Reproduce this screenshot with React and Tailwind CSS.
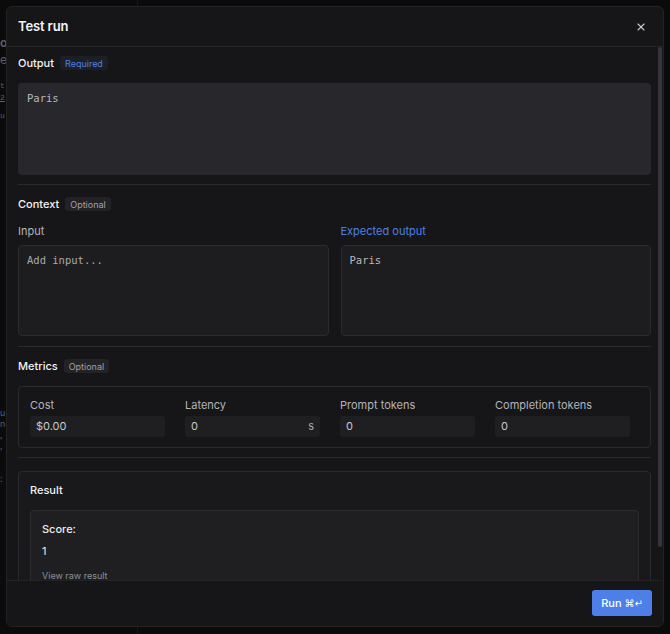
import { X } from "lucide-react";

const sans = { fontFamily: "Inter, 'Noto Sans', sans-serif" };
const mono = "font-['DejaVu_Sans_Mono',monospace] text-[10.5px]";

function Badge({ children, tone = "muted" }) {
  const tones = {
    blue: "bg-[#1c1f26] text-[#4f80e6]",
    muted: "bg-[#232326] text-[#a1a1a8]",
  };
  return (
    <span className={`inline-flex h-[14px] items-center rounded-[3px] px-[5px] text-[9px] leading-none ${tones[tone]}`}>
      {children}
    </span>
  );
}

function SectionTitle({ title, badge, tone }) {
  return (
    <div className="flex h-[14px] items-center gap-[6px]">
      <span className="text-[11px] font-medium text-[#f2f2f3]">{title}</span>
      <Badge tone={tone}>{badge}</Badge>
    </div>
  );
}

function Divider({ className = "" }) {
  return <div className={`h-px bg-[#2a2a2d] ${className}`} />;
}

function MetricField({ label, value, suffix }) {
  return (
    <div className="flex w-[135px] flex-col">
      <span className="h-[14px] text-[11px] leading-[14px] text-[#b4b4ba]">{label}</span>
      <div className="mt-[4px] flex h-[21px] items-center justify-between rounded-[3px] bg-[#1f1f22] px-[6px] text-[11px] text-[#c9c9cd]">
        <span>{value}</span>
        {suffix && <span className="text-[#a8a8ad]">{suffix}</span>}
      </div>
    </div>
  );
}

// faint bits of the page that sits under the modal
function Backdrop() {
  return (
    <div className="pointer-events-none absolute inset-0 text-[#5f5f64]" style={sans}>
      <div className="absolute left-[137px] top-0 h-full w-px bg-[#161617]" />
      <span className="absolute left-0 top-[34px] text-[12px] font-semibold">o</span>
      <span className="absolute left-0 top-[51px] text-[12px]">e</span>
      <span className="absolute left-0 top-[80px] font-mono text-[8px]">t</span>
      <span className="absolute left-0 top-[92px] font-mono text-[8px] underline">2</span>
      <span className="absolute left-0 top-[110px] font-mono text-[8px]">u</span>
      <span className="absolute left-0 top-[406px] text-[9px] text-[#3c5ea8]">u</span>
      <span className="absolute left-0 top-[417px] text-[9px]">n</span>
      <span className="absolute left-0 top-[428px] text-[9px]">,</span>
      <span className="absolute left-0 top-[439px] text-[9px]">,</span>
      <span className="absolute left-0 top-[472px] text-[9px]">:</span>
    </div>
  );
}

export default function App() {
  return (
    <div className="relative h-[634px] w-[670px] overflow-hidden bg-[#0b0b0c]" style={sans}>
      <Backdrop />

      <div className="absolute left-[6px] top-[6px] flex h-[621px] w-[658px] flex-col overflow-hidden rounded-[6px] border border-[#232326] bg-[#161618]">
        {/* header */}
        <div className="flex h-[40px] shrink-0 items-center justify-between border-b border-[#232326] pl-[11px] pr-[16px]">
          <span className="text-[13px] font-semibold tracking-[-0.01em] text-[#f4f4f5]">Test run</span>
          <X size={12} strokeWidth={2.2} className="text-[#c9c9cc]" />
        </div>

        {/* scrolling body */}
        <div className="relative min-h-0 flex-1">
          <div className="h-full overflow-y-auto pb-[12px] pl-[11px] pr-[12px] [scrollbar-width:none]">
            <div className="pt-[9px]">
              <SectionTitle title="Output" badge="Required" tone="blue" />
              <div className={`mt-[13px] h-[92px] rounded-[4px] bg-[#28282c] px-[9px] py-[8px] text-[#b9b9bd] ${mono}`}>
                Paris
              </div>
            </div>

            <Divider className="mt-[9px]" />

            <div className="mt-[12px]">
              <SectionTitle title="Context" badge="Optional" />
              <div className="mt-[13px] grid grid-cols-2 gap-3">
                <div className="flex flex-col">
                  <span className="h-[14px] text-[11px] leading-[14px] text-[#b4b4ba]">Input</span>
                  <div className={`mt-[7px] h-[91px] rounded-[4px] border border-[#2b2b2f] bg-[#1d1d20] px-[8px] py-[7px] text-[#a9a9ae] ${mono}`}>
                    Add input...
                  </div>
                </div>
                <div className="flex flex-col">
                  <span className="h-[14px] text-[11px] leading-[14px] text-[#4f80e6]">Expected output</span>
                  <div className={`mt-[7px] h-[91px] rounded-[4px] border border-[#2b2b2f] bg-[#1d1d20] px-[8px] py-[7px] text-[#b9b9bd] ${mono}`}>
                    Paris
                  </div>
                </div>
              </div>
            </div>

            <Divider className="mt-[10px]" />

            <div className="mt-[12px]">
              <SectionTitle title="Metrics" badge="Optional" />
              <div className="mt-[13px] flex h-[62px] gap-5 rounded-[4px] border border-[#2a2a2e] pl-[11px] pt-[11px]">
                <MetricField label="Cost" value="$0.00" />
                <MetricField label="Latency" value="0" suffix="s" />
                <MetricField label="Prompt tokens" value="0" />
                <MetricField label="Completion tokens" value="0" />
              </div>
            </div>

            <Divider className="mt-[9px]" />

            <div className="mt-[13px] rounded-[4px] border border-[#2a2a2e] bg-[#19191b] px-[11px] pb-[12px] pt-[11px]">
              <div className="h-[14px] text-[11px] font-medium leading-[14px] text-[#f2f2f3]">Result</div>
              <div className="mt-[13px] rounded-[4px] border border-[#2c2c30] bg-[#1f1f22] px-[11px] pb-[12px] pt-[11px]">
                <div className="h-[14px] text-[11px] font-medium leading-[14px] text-[#ececee]">Score:</div>
                <div className="mt-[8px] h-[14px] text-[11px] leading-[14px] text-[#ececee]">1</div>
                <div className="mt-[12px] h-[12px] text-[9px] leading-[12px] text-[#8f8f95]">View raw result</div>
              </div>
            </div>
          </div>

          {/* overlay scrollbar thumb */}
          <div className="pointer-events-none absolute right-[1px] top-0 h-[500px] w-[4px] rounded-full bg-[#36363a]" />
        </div>

        {/* footer */}
        <div className="flex h-[46px] shrink-0 items-start justify-end border-t border-[#232326] bg-[#161618] pr-[11px] pt-[9px]">
          <button className="flex h-[26px] items-center gap-[3px] rounded-[3px] bg-[#4e7fe8] px-[9px] text-[11px] font-medium text-white">
            <span>Run</span>
            <span className="font-['DejaVu_Sans',sans-serif] text-[10px]">⌘↵</span>
          </button>
        </div>
      </div>
    </div>
  );
}
